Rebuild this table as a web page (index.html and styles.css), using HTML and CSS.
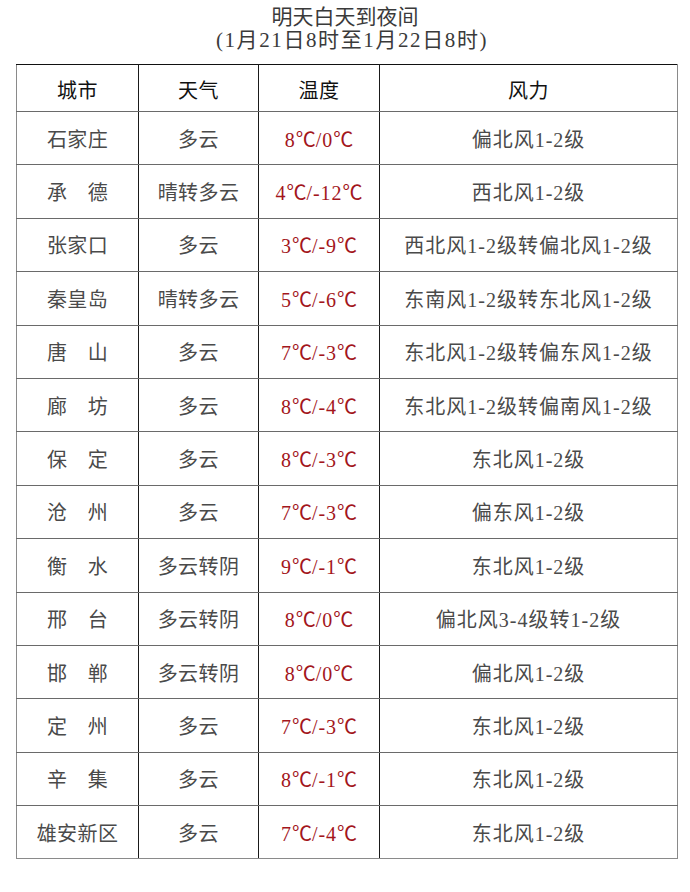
FILE: index.html
```html
<!DOCTYPE html>
<html lang="zh-CN">
<head>
<meta charset="utf-8">
<title>明天白天到夜间天气</title>
<link rel="stylesheet" href="styles.css">
</head>
<body>
<div class="page">
  <div class="title">
    <div class="t1">明天白天到夜间</div>
    <div class="t2">(1月21日8时至1月22日8时)</div>
  </div>
  <table class="wx">
    <colgroup>
      <col class="c-city"><col class="c-weather"><col class="c-temp"><col class="c-wind">
    </colgroup>
    <thead>
      <tr><th>城市</th><th>天气</th><th>温度</th><th>风力</th></tr>
    </thead>
    <tbody>
      <tr><td>石家庄</td><td>多云</td><td class="temp">8<span class="deg">℃</span>/0<span class="deg">℃</span></td><td class="wind">偏北风1-2级</td></tr>
      <tr><td>承　德</td><td>晴转多云</td><td class="temp">4<span class="deg">℃</span>/-12<span class="deg">℃</span></td><td class="wind">西北风1-2级</td></tr>
      <tr><td>张家口</td><td>多云</td><td class="temp">3<span class="deg">℃</span>/-9<span class="deg">℃</span></td><td class="wind">西北风1-2级转偏北风1-2级</td></tr>
      <tr><td>秦皇岛</td><td>晴转多云</td><td class="temp">5<span class="deg">℃</span>/-6<span class="deg">℃</span></td><td class="wind">东南风1-2级转东北风1-2级</td></tr>
      <tr><td>唐　山</td><td>多云</td><td class="temp">7<span class="deg">℃</span>/-3<span class="deg">℃</span></td><td class="wind">东北风1-2级转偏东风1-2级</td></tr>
      <tr><td>廊　坊</td><td>多云</td><td class="temp">8<span class="deg">℃</span>/-4<span class="deg">℃</span></td><td class="wind">东北风1-2级转偏南风1-2级</td></tr>
      <tr><td>保　定</td><td>多云</td><td class="temp">8<span class="deg">℃</span>/-3<span class="deg">℃</span></td><td class="wind">东北风1-2级</td></tr>
      <tr><td>沧　州</td><td>多云</td><td class="temp">7<span class="deg">℃</span>/-3<span class="deg">℃</span></td><td class="wind">偏东风1-2级</td></tr>
      <tr><td>衡　水</td><td>多云转阴</td><td class="temp">9<span class="deg">℃</span>/-1<span class="deg">℃</span></td><td class="wind">东北风1-2级</td></tr>
      <tr><td>邢　台</td><td>多云转阴</td><td class="temp">8<span class="deg">℃</span>/0<span class="deg">℃</span></td><td class="wind">偏北风3-4级转1-2级</td></tr>
      <tr><td>邯　郸</td><td>多云转阴</td><td class="temp">8<span class="deg">℃</span>/0<span class="deg">℃</span></td><td class="wind">偏北风1-2级</td></tr>
      <tr><td>定　州</td><td>多云</td><td class="temp">7<span class="deg">℃</span>/-3<span class="deg">℃</span></td><td class="wind">东北风1-2级</td></tr>
      <tr><td>辛　集</td><td>多云</td><td class="temp">8<span class="deg">℃</span>/-1<span class="deg">℃</span></td><td class="wind">东北风1-2级</td></tr>
      <tr><td>雄安新区</td><td>多云</td><td class="temp">7<span class="deg">℃</span>/-4<span class="deg">℃</span></td><td class="wind">东北风1-2级</td></tr>
    </tbody>
  </table>
</div>
</body>
</html>
```

FILE: styles.css
```css
html, body {
  margin: 0;
  padding: 0;
  background: #ffffff;
}

body {
  font-family: "Liberation Serif", "Noto Sans CJK SC", serif;
  color: #4a4a4a;
}

.page {
  width: 690px;
  padding-top: 6px;
}

.title {
  text-align: center;
  font-size: 21px;
  line-height: 23px;
  color: #3a3a3a;
}

.t2 {
  letter-spacing: 1.6px;
  padding-left: 14px;
}

.wx {
  margin: 12px 0 0 16px;
  width: 661px;
  border-collapse: collapse;
  table-layout: fixed;
  font-size: 20px;
}

.c-city { width: 122px; }
.c-weather { width: 120px; }
.c-temp { width: 121px; }
.c-wind { width: 298px; }

.wx th,
.wx td {
  padding: 0;
  text-align: center;
  vertical-align: middle;
  border-left: 1px solid #1a1a1a;
  border-right: 1px solid #1a1a1a;
  border-top: 1px solid #6a6a6a;
  border-bottom: 1px solid #6a6a6a;
  letter-spacing: 0.4px;
}

.wx th:first-child,
.wx td:first-child {
  border-left-color: #8a8a8a;
}

.wx th:last-child,
.wx td:last-child {
  border-right-color: #8a8a8a;
}

.wx thead th {
  border-top: 1px solid #111111;
  height: 44px;
  font-weight: normal;
  color: #111111;
  padding-top: 2px;
}

.wx tbody td {
  height: 52.4px;
}

.wx tbody tr:last-child td {
  border-bottom-color: #8a8a8a;
}

.wx td.temp {
  color: #a3161c;
  letter-spacing: 1px;
}

.wx td.wind {
  letter-spacing: 1px;
}

.deg {
  display: inline-block;
  width: 1em;
  text-align: left;
  letter-spacing: 0;
  font-family: "Noto Sans CJK SC", sans-serif;
}
```
